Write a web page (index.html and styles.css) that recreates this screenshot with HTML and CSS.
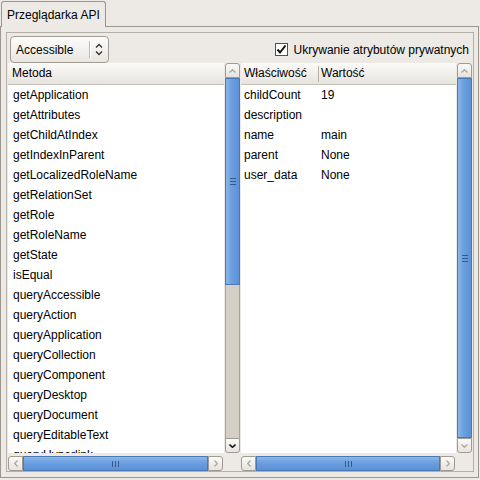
FILE: index.html
```html
<!DOCTYPE html>
<html lang="pl">
<head>
<meta charset="utf-8">
<title>Przeglądarka API</title>
<link rel="stylesheet" href="styles.css">
</head>
<body>
<div class="tabbar">
  <div class="tab">Przeglądarka API</div>
</div>
<div class="notebook">
  <div class="frame">
    <div class="toolbar">
      <div class="combo">
        <span class="combo-text">Accessible</span>
        <span class="combo-sep"></span>
        <svg class="combo-arrow" width="8" height="13" viewBox="0 0 8 13"><polyline points="1,4.5 4,1.5 7,4.5" /><polyline points="1,8.5 4,11.5 7,8.5" /></svg>
      </div>
      <label class="check">
        <span class="box"><svg width="11" height="11" viewBox="0 0 11 11"><polyline points="1.5,5.5 4,8.5 9.5,1.5" /></svg></span>
        <span class="check-text">Ukrywanie atrybutów prywatnych</span>
      </label>
    </div>
    <div class="panes">
      <div class="scrolled left">
        <div class="list">
          <div class="header"><div class="hcell">Metoda</div></div>
          <div class="row">getApplication</div>
          <div class="row">getAttributes</div>
          <div class="row">getChildAtIndex</div>
          <div class="row">getIndexInParent</div>
          <div class="row">getLocalizedRoleName</div>
          <div class="row">getRelationSet</div>
          <div class="row">getRole</div>
          <div class="row">getRoleName</div>
          <div class="row">getState</div>
          <div class="row">isEqual</div>
          <div class="row">queryAccessible</div>
          <div class="row">queryAction</div>
          <div class="row">queryApplication</div>
          <div class="row">queryCollection</div>
          <div class="row">queryComponent</div>
          <div class="row">queryDesktop</div>
          <div class="row">queryDocument</div>
          <div class="row">queryEditableText</div>
          <div class="row">queryHyperlink</div>
        </div>
        <div class="vscroll">
          <div class="sbtn up"><svg width="7" height="4" viewBox="0 0 7 4" class="arr dis"><polyline points="0.5,3.5 3.5,0.7 6.5,3.5" /></svg></div>
          <div class="thumb vthumb short"><svg width="6" height="7" viewBox="0 0 6 7" class="grip"><rect x="0" y="0" width="6" height="1"/><rect x="0" y="3" width="6" height="1"/><rect x="0" y="6" width="6" height="1"/></svg></div>
          <div class="trough"></div>
          <div class="sbtn down"><svg width="7" height="4" viewBox="0 0 7 4" class="arr en"><polyline points="0.5,0.5 3.5,3.3 6.5,0.5" /></svg></div>
        </div>
        <div class="hscroll">
          <div class="sbtn lft"><svg width="4" height="7" viewBox="0 0 4 7" class="arr dis"><polyline points="3.5,0.5 0.7,3.5 3.5,6.5" /></svg></div>
          <div class="thumb hthumb"><svg width="7" height="6" viewBox="0 0 7 6" class="grip"><rect x="0" y="0" width="1" height="6"/><rect x="3" y="0" width="1" height="6"/><rect x="6" y="0" width="1" height="6"/></svg></div>
          <div class="sbtn rgt"><svg width="4" height="7" viewBox="0 0 4 7" class="arr dis"><polyline points="0.5,0.5 3.3,3.5 0.5,6.5" /></svg></div>
        </div>
      </div>
      <div class="scrolled right">
        <div class="list">
          <div class="header">
            <div class="hcell c1">Właściwość</div>
            <div class="hsep"></div>
            <div class="hcell c2">Wartość</div>
          </div>
          <div class="row prop"><span class="c1">childCount</span><span class="c2">19</span></div>
          <div class="row prop"><span class="c1">description</span><span class="c2"></span></div>
          <div class="row prop"><span class="c1">name</span><span class="c2">main</span></div>
          <div class="row prop"><span class="c1">parent</span><span class="c2">None</span></div>
          <div class="row prop"><span class="c1">user_data</span><span class="c2">None</span></div>
        </div>
        <div class="vscroll">
          <div class="sbtn up"><svg width="7" height="4" viewBox="0 0 7 4" class="arr dis"><polyline points="0.5,3.5 3.5,0.7 6.5,3.5" /></svg></div>
          <div class="thumb vthumb full"><svg width="6" height="7" viewBox="0 0 6 7" class="grip"><rect x="0" y="0" width="6" height="1"/><rect x="0" y="3" width="6" height="1"/><rect x="0" y="6" width="6" height="1"/></svg></div>
          <div class="sbtn down"><svg width="7" height="4" viewBox="0 0 7 4" class="arr dis"><polyline points="0.5,0.5 3.5,3.3 6.5,0.5" /></svg></div>
        </div>
        <div class="hscroll">
          <div class="sbtn lft"><svg width="4" height="7" viewBox="0 0 4 7" class="arr dis"><polyline points="3.5,0.5 0.7,3.5 3.5,6.5" /></svg></div>
          <div class="thumb hthumb"><svg width="7" height="6" viewBox="0 0 7 6" class="grip"><rect x="0" y="0" width="1" height="6"/><rect x="3" y="0" width="1" height="6"/><rect x="6" y="0" width="1" height="6"/></svg></div>
          <div class="sbtn rgt"><svg width="4" height="7" viewBox="0 0 4 7" class="arr dis"><polyline points="0.5,0.5 3.3,3.5 0.5,6.5" /></svg></div>
        </div>
      </div>
    </div>
  </div>
</div>
</body>
</html>
```
FILE: styles.css
```css
* { box-sizing: border-box; }
html, body { margin: 0; padding: 0; }
body {
  width: 480px;
  height: 480px;
  overflow: hidden;
  background: #edeae5;
  font-family: "Liberation Sans", Arial, sans-serif;
  font-size: 12px;
  color: #000;
}

.tabbar {
  height: 26px;
  padding: 1px 0 0 1px;
  display: flex;
  align-items: flex-start;
}
.tab {
  position: relative;
  z-index: 1;
  width: 105px;
  height: 26px;
  padding: 1px 0 0 5px;
  line-height: 24px;
  border: 1px solid #9b968e;
  border-bottom: none;
  border-radius: 3px 3px 0 0;
  background: #edeae5;
  white-space: nowrap;
}

.notebook {
  width: 479px;
  height: 452px;
  border: 1px solid #9b968e;
  padding: 5px 4px 5px 5px;
}
.frame {
  height: 100%;
  border: 1px solid #b5b0a7;
  display: flex;
  flex-direction: column;
}

.toolbar {
  flex: none;
  height: 30px;
  padding: 3px 4px 0 3px;
  display: flex;
  justify-content: space-between;
  align-items: center;
}
.combo {
  width: 99px;
  height: 27px;
  border: 1px solid #a39e95;
  border-radius: 4px;
  background: linear-gradient(#fdfcfb, #e9e6e0);
  display: flex;
  align-items: center;
  padding-left: 5px;
}
.combo-text { width: 73px; }
.combo-sep {
  width: 2px;
  height: 17px;
  border-left: 1px solid #bdb8b0;
  border-right: 1px solid #ffffff;
}
.combo-arrow {
  margin-left: 4px;
  fill: none;
  stroke: #333;
  stroke-width: 1.3;
}
.check {
  display: flex;
  align-items: center;
  gap: 6px;
}
.box {
  width: 13px;
  height: 13px;
  border: 1px solid #505050;
  background: #fff;
  display: flex;
  align-items: center;
  justify-content: center;
}
.box svg {
  fill: none;
  stroke: #111;
  stroke-width: 2;
}

.panes {
  flex: 1;
  min-height: 0;
  display: flex;
  padding: 0 1px;
  gap: 1px;
}
.scrolled {
  display: grid;
  grid-template-columns: 1fr 15px;
  grid-template-rows: 1fr 15px;
  column-gap: 1px;
  row-gap: 3px;
  min-height: 0;
}
.scrolled.left { width: 232px; }
.scrolled.right { width: 231px; }

.list {
  background: #fff;
  overflow: hidden;
  min-height: 0;
}
.header {
  height: 22px;
  background: linear-gradient(#fcfbfa, #e6e3de);
  border-bottom: 1px solid #c5c0b8;
  display: flex;
  align-items: center;
  line-height: 21px;
}
.hcell { padding-left: 4px; white-space: nowrap; }
.hsep {
  width: 1px;
  height: 16px;
  background: #b3aea6;
}
.row {
  height: 20px;
  line-height: 20px;
  padding-left: 5px;
  white-space: nowrap;
}
.row.prop { padding-left: 0; display: flex; }
.c1 { width: 77px; padding-left: 3px; flex: none; }
.c2 { padding-left: 3px; }
.hcell.c2 { padding-left: 2px; }

.vscroll {
  display: flex;
  flex-direction: column;
  min-height: 0;
}
.hscroll {
  display: flex;
  margin-right: 1px;
}
.sbtn {
  flex: none;
  border: 1px solid #a09b92;
  background: linear-gradient(#fbfaf8, #e7e3dd);
  display: flex;
  align-items: center;
  justify-content: center;
}
.vscroll .sbtn { height: 15px; }
.hscroll .sbtn { width: 15px; }
.sbtn.up { border-radius: 3px 3px 0 0; }
.sbtn.down { border-radius: 0 0 3px 3px; }
.sbtn.lft { border-radius: 3px 0 0 3px; }
.sbtn.rgt { border-radius: 0 3px 3px 0; }
.arr { fill: none; stroke-width: 1.3; }
.arr.dis { stroke: #aca79f; }
.arr.en { stroke: #1e1e1e; stroke-width: 1.6; }

.thumb {
  border: 1px solid #4b79b4;
  display: flex;
  align-items: center;
  justify-content: center;
}
.vthumb { background: linear-gradient(to right, #8cb6ea, #6a9fe0 45%, #5b91d7); }
.hthumb { flex: 1; background: linear-gradient(#8cb6ea, #6a9fe0 45%, #5b91d7); }
.vthumb.short { height: 207px; flex: none; }
.vthumb.full { flex: 1; }
.grip { fill: #36598a; }
.trough {
  flex: 1;
  background: #d5cfc5;
  border-left: 1px solid #a8a39a;
  border-right: 1px solid #a8a39a;
}
```
